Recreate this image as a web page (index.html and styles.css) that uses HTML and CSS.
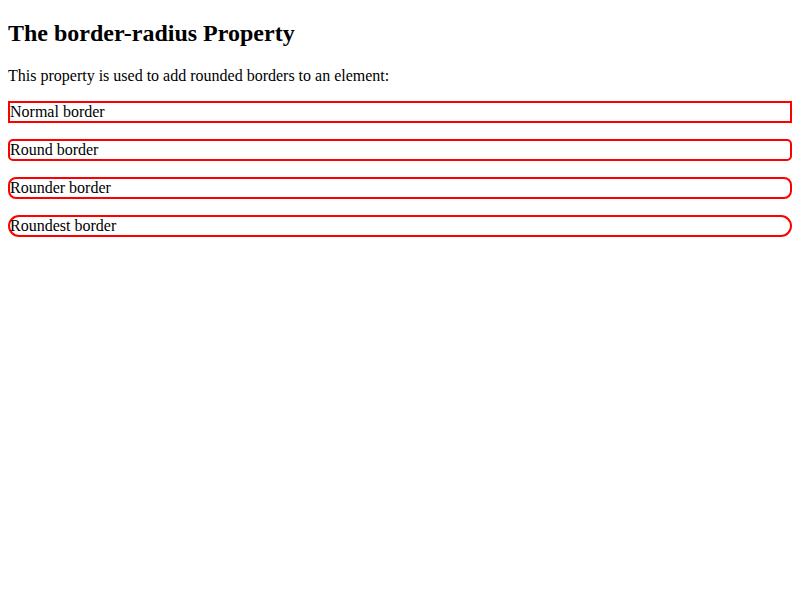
FILE: index.html
```html
<!DOCTYPE html>
<html>
<head>
<meta charset="utf-8">
<link rel="stylesheet" href="styles.css">
</head>
<body>
<h2 class="title">The border-radius Property</h2>
<p>This property is used to add rounded borders to an element:</p>
<p class="box normal">Normal border</p>
<p class="box round1">Round border</p>
<p class="box round2">Rounder border</p>
<p class="box round3">Roundest border</p>
</body>
</html>
```

FILE: styles.css
```css
body {
  font-family: "Liberation Serif", "Times New Roman", serif;
}
.title {
  margin-top: 12px;
}
.box {
  border: 2px solid red;
}
.round1 {
  border-radius: 5px;
}
.round2 {
  border-radius: 8px;
}
.round3 {
  border-radius: 12px;
}
```
